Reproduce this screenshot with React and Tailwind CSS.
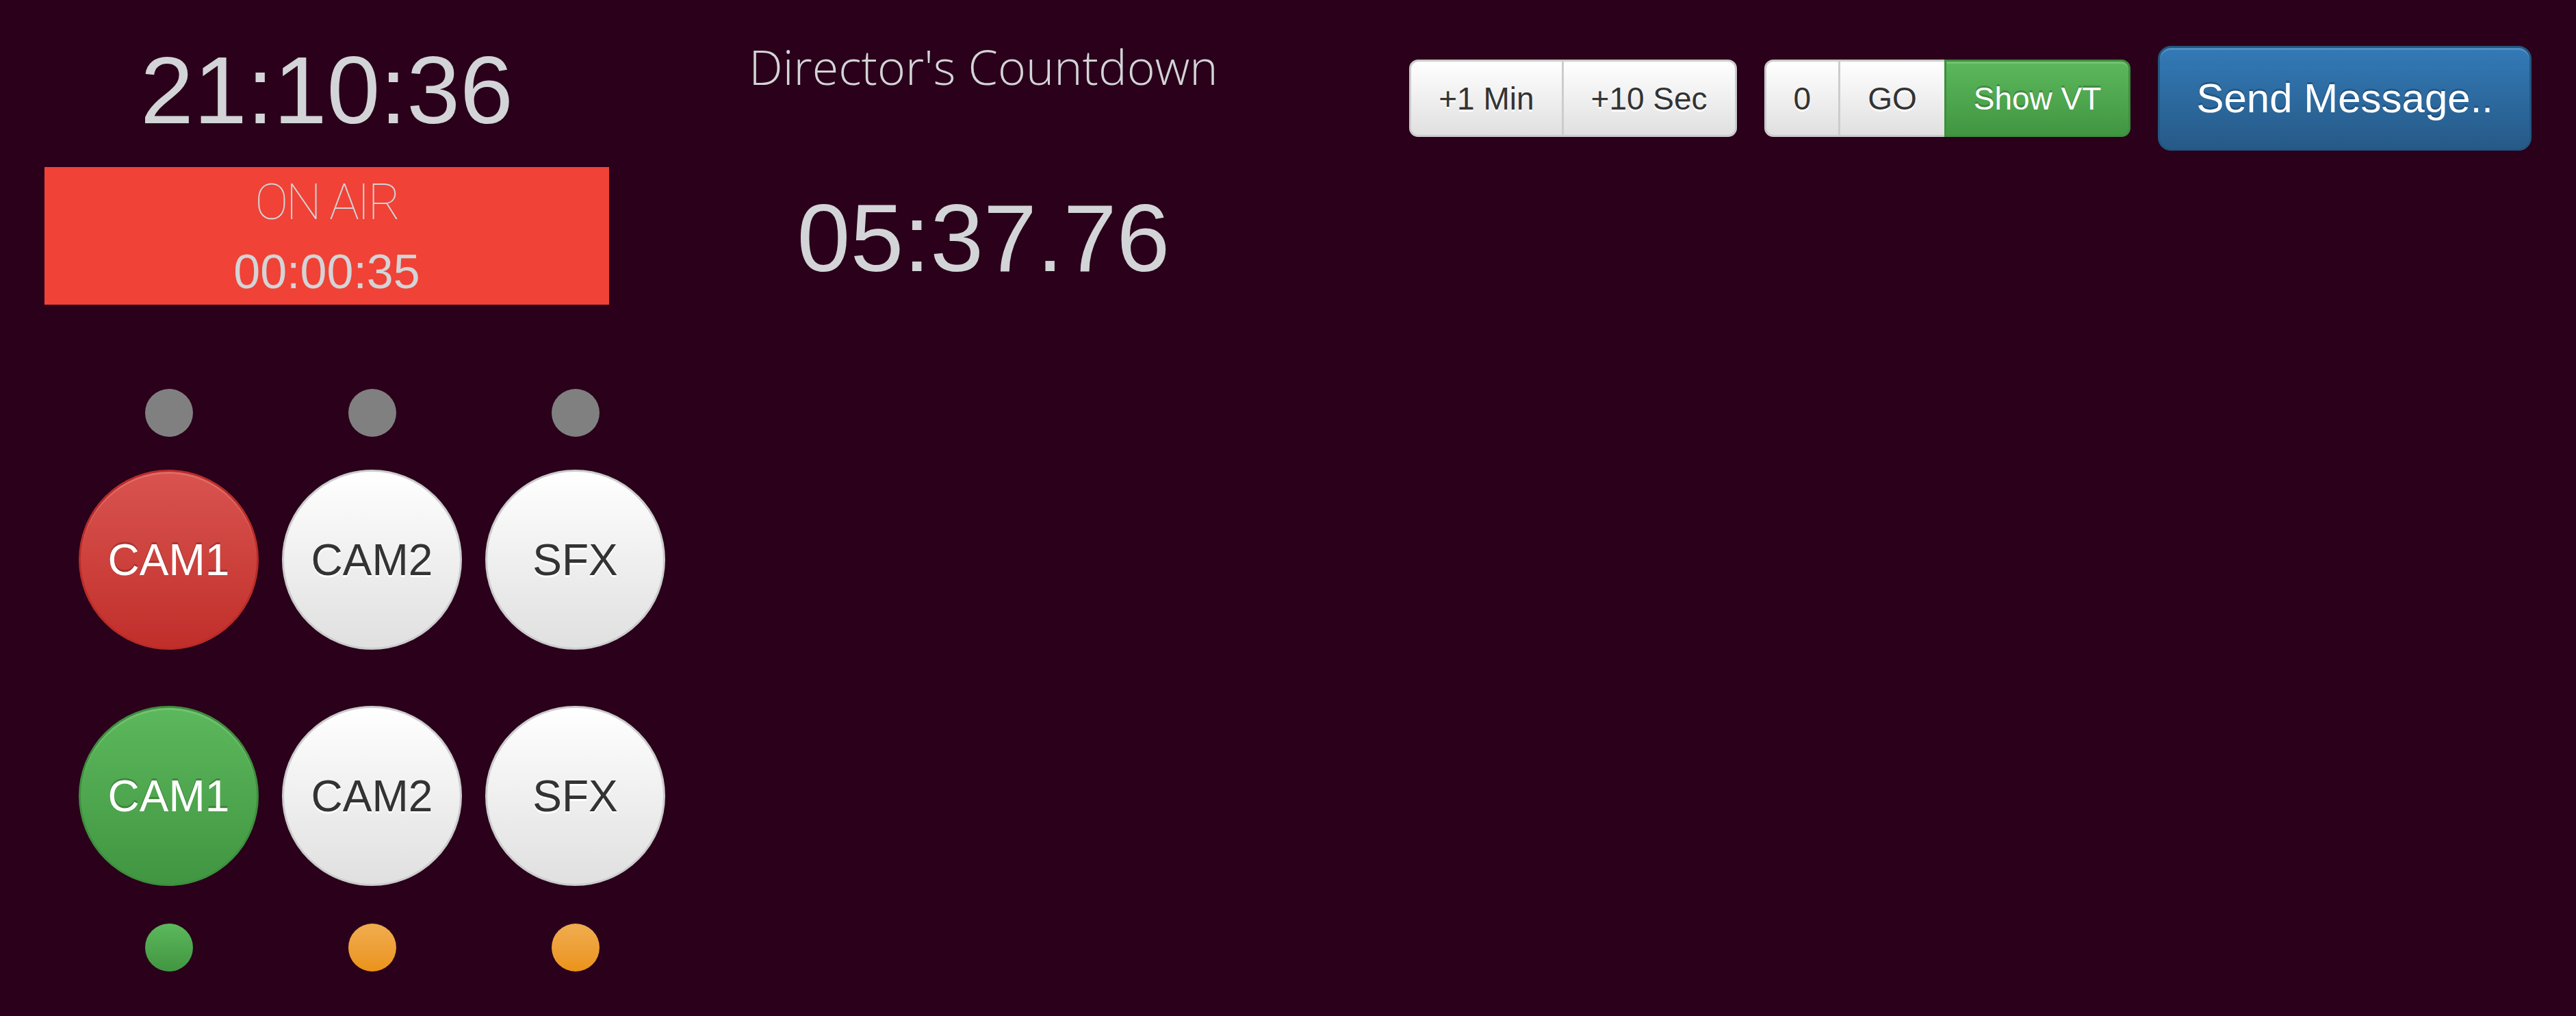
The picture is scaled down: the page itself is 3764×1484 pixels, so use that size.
import React from "react";

// bootstrap-3-theme look, scaled up for the big monitor
const tones = {
  danger:
    "border-[#b92c28] bg-linear-to-b from-[#d9534f] to-[#c12e2a] text-white [text-shadow:0_-3px_0_rgba(0,0,0,0.2)] shadow-[inset_0_3px_0_rgba(255,255,255,0.15)]",
  success:
    "border-[#3e8f3e] bg-linear-to-b from-[#5cb85c] to-[#419641] text-white [text-shadow:0_-3px_0_rgba(0,0,0,0.2)] shadow-[inset_0_3px_0_rgba(255,255,255,0.15)]",
  primary:
    "border-[#245580] bg-linear-to-b from-[#337ab7] to-[#265a88] text-white [text-shadow:0_-3px_0_rgba(0,0,0,0.2)] shadow-[inset_0_3px_0_rgba(255,255,255,0.15)]",
  default:
    "border-[#cccccc] bg-linear-to-b from-[#ffffff] to-[#e0e0e0] text-[#333333] [text-shadow:0_3px_0_#fff]",
};

const dots = {
  gray: "bg-[#808080]",
  green: "bg-linear-to-b from-[#5cb85c] to-[#419641]",
  orange: "bg-linear-to-b from-[#f0ad4e] to-[#eb9316]",
};

const topDots = ["gray", "gray", "gray"];
const bottomDots = ["green", "orange", "orange"];

const previewRow = [
  { label: "CAM1", tone: "danger" },
  { label: "CAM2", tone: "default" },
  { label: "SFX", tone: "default" },
];

const programRow = [
  { label: "CAM1", tone: "success" },
  { label: "CAM2", tone: "default" },
  { label: "SFX", tone: "default" },
];

function DotRow({ items }) {
  return (
    <div className="grid grid-cols-[repeat(3,263px)] gap-x-[34px]">
      {items.map((d, i) => (
        <div key={i} className="flex justify-center">
          <div className={`w-[70px] h-[70px] rounded-full ${dots[d]}`} />
        </div>
      ))}
    </div>
  );
}

function SourceRow({ items }) {
  return (
    <div className="grid grid-cols-[repeat(3,263px)] gap-x-[34px]">
      {items.map((s, i) => (
        <button
          key={i}
          className={`w-[263px] h-[263px] rounded-full border-[3px] flex items-center justify-center text-[64px] leading-none ${tones[s.tone]}`}
        >
          {s.label}
        </button>
      ))}
    </div>
  );
}

function BtnGroup({ buttons }) {
  return (
    <div className="flex">
      {buttons.map((b, i) => (
        <button
          key={b.label}
          className={`h-[113px] px-[40px] border-[3px] text-[46px] leading-none flex items-center ${
            tones[b.tone || "default"]
          } ${i === 0 ? "rounded-l-[13px]" : "-ml-[3px]"} ${
            i === buttons.length - 1 ? "rounded-r-[13px]" : ""
          }`}
        >
          {b.label}
        </button>
      ))}
    </div>
  );
}

export default function App() {
  return (
    <div className="min-h-screen w-full bg-[#2a001b] text-[#d3d4d7] font-['Liberation_Sans',Arial,sans-serif] flex px-[65px]">
      {/* Left: clock, on-air and the switcher */}
      <div className="w-[957px] shrink-0 flex flex-col pt-[62px]">
        <div className="w-[825px] flex flex-col items-center">
          <div className="text-[140px] leading-[140px]">21:10:36</div>
          <div className="mt-[42px] w-full h-[201px] bg-[#f04236] flex flex-col items-center pt-[15px]">
            <div className="font-['Roboto',sans-serif] font-thin text-[73px] leading-[72px] tracking-[-3px]">
              ON AIR
            </div>
            <div className="mt-[31px] text-[70px] leading-[70px]">00:00:35</div>
          </div>
        </div>

        <div className="ml-[50px] mt-[123px] flex flex-col">
          <DotRow items={topDots} />
          <div className="mt-[48px]">
            <SourceRow items={previewRow} />
          </div>
          <div className="mt-[82px]">
            <SourceRow items={programRow} />
          </div>
          <div className="mt-[55px]">
            <DotRow items={bottomDots} />
          </div>
        </div>
      </div>

      {/* Center: director's countdown */}
      <div className="w-[830px] shrink-0 flex flex-col items-center pt-[62px]">
        <div className="font-['Open_Sans',sans-serif] font-light text-[70px] leading-[70px]">
          Director's Countdown
        </div>
        <div className="mt-[146px] text-[140px] leading-[140px]">05:37.76</div>
      </div>

      {/* Right: controls */}
      <div className="flex-1 flex justify-end items-center gap-[40px] pt-[67px] self-start">
        <BtnGroup buttons={[{ label: "+1 Min" }, { label: "+10 Sec" }]} />
        <BtnGroup
          buttons={[{ label: "0" }, { label: "GO" }, { label: "Show VT", tone: "success" }]}
        />
        <button
          className={`h-[153px] px-[53px] border-[3px] rounded-[19px] text-[60px] leading-none ${tones.primary}`}
        >
          Send Message..
        </button>
      </div>
    </div>
  );
}
